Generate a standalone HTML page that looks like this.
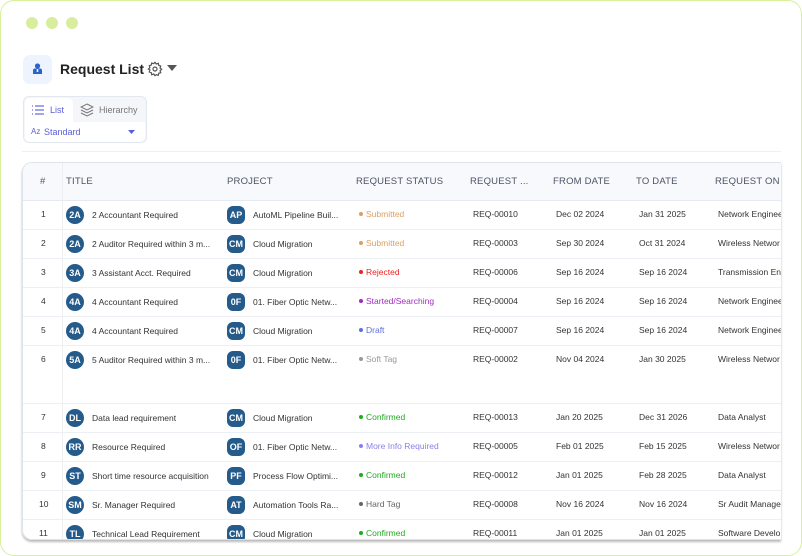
<!DOCTYPE html>
<html><head><meta charset="utf-8"><style>
*{box-sizing:border-box;margin:0;padding:0}
body{width:802px;height:556px;background:#fff;font-family:"Liberation Sans",sans-serif;position:relative;overflow:hidden}
.frame{position:absolute;left:0;top:0;width:802px;height:556px;border:1.5px solid #d9ef9c;border-radius:14px}
.dot{position:absolute;top:17px;width:12px;height:12px;border-radius:50%;background:#d8ee9e}
.ticon{position:absolute;left:23px;top:55px;width:29px;height:29px;border-radius:7px;background:#eef4fd}
h1{position:absolute;left:60px;top:61px;font-size:14px;font-weight:bold;color:#222}
.tabs{position:absolute;left:23px;top:96px;width:124px;height:47px;border:1px solid #e3e8f0;border-radius:6px;background:#f4f6fa}
.tab1{position:absolute;left:1px;top:1px;width:48px;height:25px;background:#fff;border-radius:5px 5px 0 0}
.std{position:absolute;left:1px;top:25px;width:120px;height:20px;background:#fff;border-radius:0 0 5px 5px}
.t{position:absolute;font-size:9px;white-space:nowrap}
.card{position:absolute;left:22px;top:162px;width:759px;height:378px;border:1px solid #dfe3ea;border-right:none;border-radius:10px 0 0 10px;overflow:hidden;box-shadow:0 2px 2px #bbb}
.hdr{position:absolute;left:0;top:0;width:100%;height:38px;background:#f8f9fc;border-bottom:1px solid #e6e9ef}
.h{position:absolute;top:13px;font-size:9.5px;color:#4a5466;letter-spacing:.2px}
.vl{position:absolute;left:39px;top:0;width:1px;height:400px;background:#eceef2}
.row{position:absolute;left:0;width:100%;border-bottom:1px solid #eceff3}
.c{position:absolute;font-size:8.5px;color:#333;white-space:nowrap}
.av{position:absolute;width:18px;height:18px;background:#245b8b;color:#fff;font-size:9px;font-weight:bold;text-align:center;line-height:18px}
.st{position:absolute;font-size:8.5px;white-space:nowrap}
.st::before{content:"";display:inline-block;width:4px;height:4px;border-radius:50%;background:currentColor;margin-right:3px;vertical-align:middle;position:relative;top:-1px}
.topline{position:absolute;left:22px;top:151px;width:759px;height:1px;background:#eef0f4}
</style></head><body>
<div class="frame"></div>
<div class="dot" style="left:26px"></div><div class="dot" style="left:46px"></div><div class="dot" style="left:66px"></div>
<div class="ticon"><svg width="29" height="29" viewBox="0 0 29 29"><circle cx="14.5" cy="11" r="2.6" fill="#2a63c9"/><path d="M10 19v-3.5a2 2 0 0 1 2-2h5a2 2 0 0 1 2 2V19z" fill="#2a63c9"/><rect x="13.7" y="14" width="1.6" height="3" fill="#eef4fd"/></svg></div>
<h1>Request List</h1>
<svg style="position:absolute;left:147px;top:61px" width="16" height="16" viewBox="0 0 24 24" fill="none" stroke="#555" stroke-width="1.8"><circle cx="12" cy="12" r="3"/><path d="M12 2l2 2.5 3-1 .6 3.1 3 .9-1 3 2.4 2-2.4 2 1 3-3 .9-.6 3.1-3-1L12 22l-2-2.5-3 1-.6-3.1-3-.9 1-3L2 12l2.4-2-1-3 3-.9L7 3l3 1z"/></svg>
<svg style="position:absolute;left:167px;top:65px" width="10" height="6"><path d="M0 0h10L5 6z" fill="#555"/></svg>
<div class="topline"></div>
<div class="tabs"><div class="tab1"></div><div class="std"></div>
<svg style="position:absolute;left:8px;top:8px" width="12" height="10" viewBox="0 0 12 10" stroke="#6b6fe0" stroke-width="1.2"><path d="M0 1h1M3 1h9M0 5h1M3 5h9M0 9h1M3 9h9"/></svg>
<div class="t" style="left:26px;top:8px;color:#5a5fd6">List</div>
<svg style="position:absolute;left:56px;top:6px" width="14" height="14" viewBox="0 0 14 14" fill="none" stroke="#777" stroke-width="1"><path d="M7 1l6 3-6 3-6-3z M1 7l6 3 6-3 M1 10l6 3 6-3"/></svg>
<div class="t" style="left:75px;top:8px;color:#777">Hierarchy</div>
<div class="t" style="left:7px;top:30px;color:#5a5fd6;font-size:8px">Az</div>
<div class="t" style="left:20px;top:30px;color:#5a5fd6">Standard</div>
<svg style="position:absolute;left:104px;top:33px" width="7" height="4"><path d="M0 0h7L3.5 4z" fill="#5a5fd6"/></svg>
</div>
<div class="card">
<div class="hdr"></div><div class="vl"></div>
<div class="h" style="left:17px">#</div>
<div class="h" style="left:43px">TITLE</div>
<div class="h" style="left:204px">PROJECT</div>
<div class="h" style="left:333px">REQUEST STATUS</div>
<div class="h" style="left:447px">REQUEST ...</div>
<div class="h" style="left:530px">FROM DATE</div>
<div class="h" style="left:613px">TO DATE</div>
<div class="h" style="left:692px">REQUEST ON</div>
<div id="rows"></div>
</div>
<script>
var d=[["1","2A","2 Accountant Required","AP","AutoML Pipeline Buil...","Submitted","#d9a063","REQ-00010","Dec 02 2024","Jan 31 2025","Network Enginee"],
["2","2A","2 Auditor Required within 3 m...","CM","Cloud Migration","Submitted","#d9a063","REQ-00003","Sep 30 2024","Oct 31 2024","Wireless Networ"],
["3","3A","3 Assistant Acct. Required","CM","Cloud Migration","Rejected","#ee2222","REQ-00006","Sep 16 2024","Sep 16 2024","Transmission Eng"],
["4","4A","4 Accountant Required","0F","01. Fiber Optic Netw...","Started/Searching","#a02cc0","REQ-00004","Sep 16 2024","Sep 16 2024","Network Enginee"],
["5","4A","4 Accountant Required","CM","Cloud Migration","Draft","#5c6ee0","REQ-00007","Sep 16 2024","Sep 16 2024","Network Enginee"],
["6","5A","5 Auditor Required within 3 m...","0F","01. Fiber Optic Netw...","Soft Tag","#999","REQ-00002","Nov 04 2024","Jan 30 2025","Wireless Networ"],
["7","DL","Data lead requirement","CM","Cloud Migration","Confirmed","#22aa22","REQ-00013","Jan 20 2025","Dec 31 2026","Data Analyst"],
["8","RR","Resource Required","OF","01. Fiber Optic Netw...","More Info Required","#8a7fe8","REQ-00005","Feb 01 2025","Feb 15 2025","Wireless Networ"],
["9","ST","Short time resource acquisition","PF","Process Flow Optimi...","Confirmed","#22aa22","REQ-00012","Jan 01 2025","Feb 28 2025","Data Analyst"],
["10","SM","Sr. Manager Required","AT","Automation Tools Ra...","Hard Tag","#666","REQ-00008","Nov 16 2024","Nov 16 2024","Sr Audit Manage"],
["11","TL","Technical Lead Requirement","CM","Cloud Migration","Confirmed","#22aa22","REQ-00011","Jan 01 2025","Jan 01 2025","Software Develo"]];
var h="",y=38;
d.forEach(function(r,i){var H=i==5?58:29;var cy=y+10;
h+='<div class="row" style="top:'+y+'px;height:'+H+'px"></div>';
h+='<div class="c" style="left:'+(r[0].length>1?16:18)+'px;top:'+(cy-2)+'px">'+r[0]+'</div>';
h+='<div class="av" style="left:43px;top:'+(cy-5)+'px;border-radius:50%">'+r[1]+'</div>';
h+='<div class="c" style="left:69px;top:'+(cy-1)+'px">'+r[2]+'</div>';
h+='<div class="av" style="left:204px;top:'+(cy-5)+'px;border-radius:6px">'+r[3]+'</div>';
h+='<div class="c" style="left:230px;top:'+(cy-1)+'px">'+r[4]+'</div>';
h+='<div class="st" style="left:336px;top:'+(cy-2)+'px;color:'+r[6]+'">'+r[5]+'</div>';
h+='<div class="c" style="left:450px;top:'+(cy-2)+'px">'+r[7]+'</div>';
h+='<div class="c" style="left:533px;top:'+(cy-2)+'px">'+r[8]+'</div>';
h+='<div class="c" style="left:616px;top:'+(cy-2)+'px">'+r[9]+'</div>';
h+='<div class="c" style="left:695px;top:'+(cy-2)+'px">'+r[10]+'</div>';
y+=H;});
document.getElementById("rows").innerHTML=h;
</script>
</body></html>
